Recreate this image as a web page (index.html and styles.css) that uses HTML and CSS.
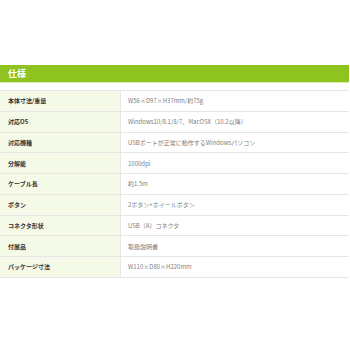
FILE: index.html
```html
<!DOCTYPE html>
<html lang="ja">
<head>
<meta charset="utf-8">
<link rel="stylesheet" href="styles.css">
</head>
<body>
<section class="spec">
  <h2 class="spec-title">仕様</h2>
  <table class="spec-table">
    <tr><th>本体寸法/重量</th><td>W56×D97×H37mm/約75g</td></tr>
    <tr><th>対応OS</th><td>Windows10/8.1/8/7、MacOSX（10.2以降）</td></tr>
    <tr><th>対応機種</th><td>USBポートが正常に動作するWindowsパソコン</td></tr>
    <tr><th>分解能</th><td>1000dpi</td></tr>
    <tr><th>ケーブル長</th><td>約1.5m</td></tr>
    <tr><th>ボタン</th><td>2ボタン+ホイールボタン</td></tr>
    <tr><th>コネクタ形状</th><td>USB（A）コネクタ</td></tr>
    <tr><th>付属品</th><td>取扱説明書</td></tr>
    <tr><th>パッケージ寸法</th><td>W110×D80×H220mm</td></tr>
  </table>
</section>
</body>
</html>
```

FILE: styles.css
```css
html, body {
  margin: 0;
  padding: 0;
  background: #ffffff;
}
body {
  font-family: "Noto Sans CJK JP", "Noto Sans", sans-serif;
}
.spec {
  padding: 65px 1px 0 0;
}
.spec-title {
  margin: 0;
  height: 17px;
  line-height: 17px;
  background: #8fc31f;
  border-bottom: 1px solid #d9ecaa;
  color: #ffffff;
  font-size: 9px;
  font-weight: bold;
  padding-left: 8px;
}
.spec-table {
  margin-top: 7px;
  width: 100%;
  border-collapse: collapse;
  font-size: 6px;
}
.spec-table th,
.spec-table td {
  height: 19.75px;
  padding: 0;
  border-top: 1px solid #e6e6e6;
  border-bottom: 1px solid #e6e6e6;
  vertical-align: middle;
  text-align: left;
}
.spec-table th {
  width: 112px;
  padding-left: 8px;
  background: #f5f9e7;
  color: #333333;
  font-weight: bold;
  border-right: 1px solid #e6e6e6;
}
.spec-table td {
  padding-left: 7px;
  color: #808080;
  font-weight: normal;
}
```
